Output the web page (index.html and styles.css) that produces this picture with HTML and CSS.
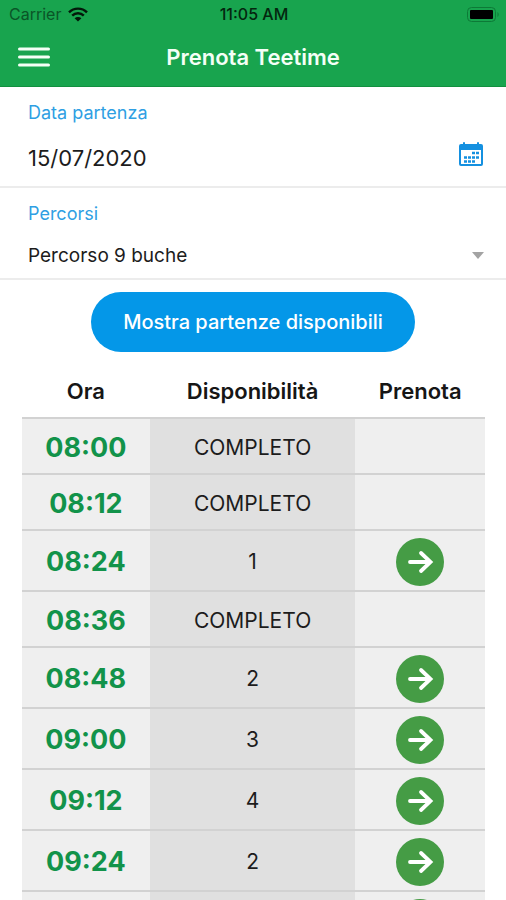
FILE: index.html
```html
<!DOCTYPE html>
<html lang="it">
<head>
  <meta charset="utf-8">
  <meta name="viewport" content="width=device-width, initial-scale=1">
  <title>Prenota Teetime</title>
  <link rel="stylesheet" href="styles.css">
</head>
<body>
  <svg class="defs" aria-hidden="true">
    <symbol id="arrow" viewBox="0 0 48 48">
      <path d="M14 24H34M25 15L34.500 24L25 33" fill="none" stroke="currentColor" stroke-width="3.800" stroke-linecap="round" stroke-linejoin="miter"/>
    </symbol>
  </svg>
  <div class="app">
    <header class="header">
      <div class="status">
        <div class="carrier">
          <span>Carrier</span>
          <svg class="wifi" viewBox="0 0 20 15" aria-hidden="true">
            <g fill="none" stroke="currentColor" stroke-width="2.4">
              <path d="M1 5.4C6 0.400 14 0.400 19 5.400"/>
              <path d="M4.200 8.700C7.400 5.500 12.600 5.500 15.800 8.700"/>
            </g>
            <path d="M10 14.500L6.600 11.200C8.500 9.500 11.500 9.500 13.400 11.200Z" fill="currentColor"/>
          </svg>
        </div>
        <time class="clock">11:05 AM</time>
        <svg class="battery" viewBox="0 0 32 15" aria-hidden="true">
          <rect x="0.500" y="0.500" width="28" height="14" rx="4" fill="none" stroke="#0d7a37"/>
          <rect x="3" y="3" width="23" height="9" rx="1" fill="#000"/>
          <path d="M30.500 5C32 6 32 9 30.500 10Z" fill="#0d7a37"/>
        </svg>
      </div>
      <div class="bar">
        <button class="menu" type="button" aria-label="Menu">
          <svg viewBox="0 0 32 20" aria-hidden="true">
            <path d="M1.500 2H30.500M1.500 10H30.500M1.500 18H30.500" stroke="currentColor" stroke-width="3" stroke-linecap="round"/>
          </svg>
        </button>
        <h1 class="title">Prenota Teetime</h1>
      </div>
    </header>
    <main class="content">
      <form class="form">
        <div class="field">
          <label class="label" for="date">Data partenza</label>
          <div class="control">
            <input class="date" id="date" type="text" value="15/07/2020">
            <button class="calendar" type="button" aria-label="Calendario">
              <svg viewBox="0 0 26 26" aria-hidden="true">
                <path d="M3 3H5V1.500Q6 0.500 7 1.500V3H19V1.500Q20 0.500 21 1.500V3H23Q25 3 25 5V23Q25 25 23 25H3Q1 25 1 23V5Q1 3 3 3Z" fill="currentColor"/>
                <rect x="3" y="9" width="20" height="14" fill="#fff"/>
                <path d="M14 12h3M18 12h3M6 16.500h3M10 16.500h3M14 16.500h3M18 16.500h3M6 20.500h3M10 20.500h3M14 20.500h3" stroke="currentColor" stroke-width="2.600"/>
              </svg>
            </button>
          </div>
        </div>
        <div class="field course">
          <label class="label" for="course">Percorsi</label>
          <div class="control">
            <select class="select" id="course">
              <option>Percorso 9 buche</option>
            </select>
            <svg class="caret" viewBox="0 0 12 7" aria-hidden="true"><path d="M0 0H12L6 7Z" fill="currentColor"/></svg>
          </div>
        </div>
        <button class="submit" type="button">Mostra partenze disponibili</button>
      </form>
      <table class="times">
        <thead>
          <tr><th class="hour">Ora</th><th>Disponibilità</th><th class="book">Prenota</th></tr>
        </thead>
        <tbody>
          <tr><td>08:00</td><td>COMPLETO</td><td></td></tr>
          <tr><td>08:12</td><td>COMPLETO</td><td></td></tr>
          <tr class="open"><td>08:24</td><td>1</td><td><button class="go" type="button" aria-label="Prenota 08:24"><svg><use href="#arrow"/></svg></button></td></tr>
          <tr><td>08:36</td><td>COMPLETO</td><td></td></tr>
          <tr class="open"><td>08:48</td><td>2</td><td><button class="go" type="button" aria-label="Prenota 08:48"><svg><use href="#arrow"/></svg></button></td></tr>
          <tr class="open"><td>09:00</td><td>3</td><td><button class="go" type="button" aria-label="Prenota 09:00"><svg><use href="#arrow"/></svg></button></td></tr>
          <tr class="open"><td>09:12</td><td>4</td><td><button class="go" type="button" aria-label="Prenota 09:12"><svg><use href="#arrow"/></svg></button></td></tr>
          <tr class="open"><td>09:24</td><td>2</td><td><button class="go" type="button" aria-label="Prenota 09:24"><svg><use href="#arrow"/></svg></button></td></tr>
          <tr class="open"><td></td><td></td><td><button class="go" type="button" aria-label="Prenota"><svg><use href="#arrow"/></svg></button></td></tr>
        </tbody>
      </table>
    </main>
  </div>
</body>
</html>
```
FILE: styles.css
```css
* { box-sizing: border-box; }

body {
  margin: 0;
  background: #fff;
  color: #1c1c1c;
  font-family: Inter, "Liberation Sans", sans-serif;
}

button, input, select {
  margin: 0;
  padding: 0;
  border: 0;
  background: none;
  color: inherit;
  font: inherit;
}

svg { display: block; }

.defs { position: absolute; width: 0; height: 0; }

.app {
  display: flex;
  flex-direction: column;
  height: 100vh;
}

.header {
  flex: none;
  background: #18a44e;
  border-bottom: 1px solid #12903f;
}

.status {
  display: grid;
  grid-template-columns: 1fr auto 1fr;
  align-items: center;
  height: 28px;
  padding: 0 7px 0 9px;
  font-size: 16px;
  color: #04260f;
}

.carrier {
  display: flex;
  align-items: center;
  gap: 7px;
  color: #0a5527;
}

.wifi { width: 20px; height: 15px; color: #03180a; }
.clock { font-weight: 500; }
.battery { width: 32px; height: 15px; justify-self: end; }

.bar {
  display: grid;
  grid-template-columns: 1fr auto 1fr;
  align-items: center;
  height: 58px;
  padding: 0 18px;
  color: #f4fff6;
}

.menu { width: 32px; height: 20px; }
.menu svg { width: 32px; height: 20px; }

.title {
  margin: 0;
  font-size: 22px;
  font-weight: 600;
}

.content {
  flex: 1;
  min-height: 0;
  overflow-y: auto;
  scrollbar-width: none;
}

.form {
  display: flex;
  flex-direction: column;
}

.field {
  display: flex;
  flex-direction: column;
  gap: 16px;
  padding: 14px 22px 12px 28px;
  border-bottom: 2px solid #ececec;
}

.course { gap: 13px; padding-bottom: 6px; }

.label {
  font-size: 18px;
  line-height: 24px;
  color: #2f9fe3;
}

.control {
  display: flex;
  align-items: center;
  height: 33px;
}

.date {
  flex: 1;
  min-width: 0;
  font-size: 22px;
}

.calendar { align-self: flex-start; width: 26px; height: 26px; color: #1490e0; }
.calendar svg { width: 26px; height: 26px; }

.select {
  flex: 1;
  min-width: 0;
  appearance: none;
  font-size: 19px;
}

.caret { width: 12px; height: 7px; color: #a3a3a3; }

.submit {
  align-self: center;
  height: 60px;
  margin-top: 12px;
  padding: 0 32px;
  border-radius: 30px;
  background: #0497e8;
  color: #fff;
  font-size: 20px;
  font-weight: 500;
}

.times {
  width: calc(100% - 43px);
  margin: 12px 21px 0 22px;
  border-collapse: separate;
  border-spacing: 0;
  table-layout: fixed;
  text-align: center;
}

th, td { padding: 0; }

th {
  height: 53px;
  color: #161616;
  font-size: 22px;
  font-weight: 600;
}

.book { width: 28%; }
.hour { width: 27.6%; }

td {
  height: 56px;
  padding-top: 2px;
  border-top: 2px solid #d2d2d2;
  background: #efefef;
  font-size: 21px;
}

.open td { height: 61px; }

td:first-child {
  color: #12934a;
  font-size: 27px;
  font-weight: 700;
}

td:nth-child(2) { background: #e0e0e0; }

.go {
  display: block;
  width: 48px;
  height: 48px;
  margin: 0 auto;
  border-radius: 50%;
  background: #459c45;
  color: #fff;
}

.go svg { width: 48px; height: 48px; }
```
